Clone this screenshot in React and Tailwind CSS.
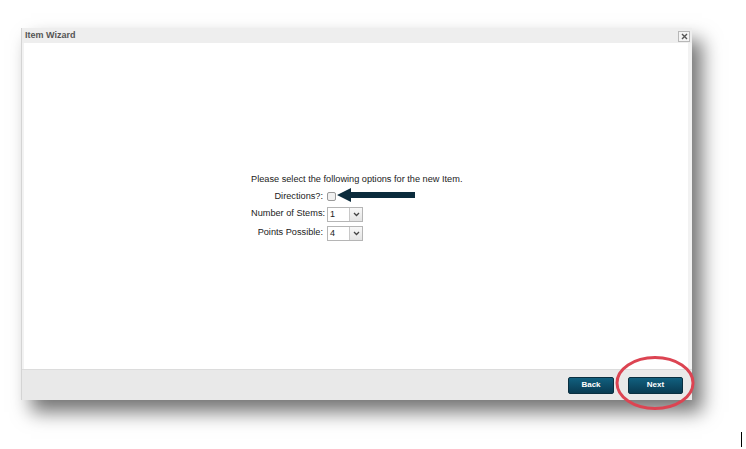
import React from "react";

function Select({ value }) {
  return (
    <div className="flex h-[15px] w-[36px] border border-[#b5b5b5] bg-white">
      <div className="flex-1 pl-[2px] text-[9px] leading-[13px] text-[#222]">{value}</div>
      <div className="flex w-[13px] items-center justify-center border-l border-[#c8c8c8] bg-gradient-to-b from-[#f8f8f8] to-[#e4e4e4]">
        <svg width="7" height="5" viewBox="0 0 7 5">
          <path d="M1 1 L3.5 3.5 L6 1" fill="none" stroke="#444" strokeWidth="1.3" />
        </svg>
      </div>
    </div>
  );
}

export default function App() {
  return (
    <div
      className="relative h-[449px] w-[746px] overflow-hidden bg-white"
      style={{ fontFamily: '"Liberation Sans", Arial, sans-serif' }}
    >
      <div className="ml-[21px] pt-[28px]">
        <div className="flex h-[372px] w-[671px] flex-col border-l border-[#d4d4d4] bg-[#f2f2f2] shadow-[10px_12px_18px_rgba(0,0,0,0.55)]">
          <div className="flex h-[15px] items-center justify-between bg-[#eeeeee] pl-[3px] pr-[2px]">
            <span className="text-[9px] font-bold text-[#555]">Item Wizard</span>
            <div className="mt-[2px] flex h-[11px] w-[12px] items-center justify-center border border-[#b8b8b8] bg-[#f4f4f4]">
              <svg width="7" height="7" viewBox="0 0 7 7">
                <path d="M1 1 L6 6 M6 1 L1 6" stroke="#555" strokeWidth="1.4" />
              </svg>
            </div>
          </div>
          <div className="flex flex-1 pl-[2px] pr-[4px]">
            <div className="flex-1 bg-white pl-[227px] pt-[130px] text-[9.2px] text-[#222]">
              <div className="whitespace-nowrap leading-[12px]">Please select the following options for the new Item.</div>
              <div className="mt-[5px] flex items-center">
                <div className="w-[72px] whitespace-nowrap text-right">Directions?:</div>
                <div className="ml-[4px] h-[9px] w-[9px] rounded-[2px] border border-[#9a9a9a] bg-[#f0f0f0]" />
              </div>
              <div className="mt-[3px] flex items-center">
                <div className="w-[72px] whitespace-nowrap text-right">Number of Stems:</div>
                <div className="ml-[4px]">
                  <Select value="1" />
                </div>
              </div>
              <div className="mt-[4px] flex items-center">
                <div className="w-[72px] whitespace-nowrap text-right">Points Possible:</div>
                <div className="ml-[4px]">
                  <Select value="4" />
                </div>
              </div>
            </div>
          </div>
          <div className="flex h-[31px] items-center justify-end gap-[14px] border-t border-[#dcdcdc] bg-[#e9e9e9] pr-[9px]">
            <button className="h-[17px] w-[46px] rounded-[2px] border border-[#0a2f40] bg-gradient-to-b from-[#11607f] to-[#093b52] text-[8px] font-bold text-white">
              Back
            </button>
            <button className="h-[17px] w-[55px] rounded-[2px] border border-[#0a2f40] bg-gradient-to-b from-[#11607f] to-[#093b52] text-[8px] font-bold text-white">
              Next
            </button>
          </div>
        </div>
      </div>

      {/* annotation arrow */}
      <svg className="absolute left-[337px] top-[187px]" width="80" height="16" viewBox="0 0 80 16">
        <path d="M0 8 L14 1 L14 5 L78 5 L78 11 L14 11 L14 15 Z" fill="#0b2b3c" />
      </svg>

      {/* annotation ellipse */}
      <svg className="absolute left-[614px] top-[354px]" width="82" height="58" viewBox="0 0 82 58">
        <ellipse cx="41" cy="29" rx="38" ry="25.5" fill="none" stroke="#dc4452" strokeWidth="3" />
      </svg>

      <div className="absolute left-[741px] top-[432px] h-[15px] w-[1px] bg-black" />
    </div>
  );
}
